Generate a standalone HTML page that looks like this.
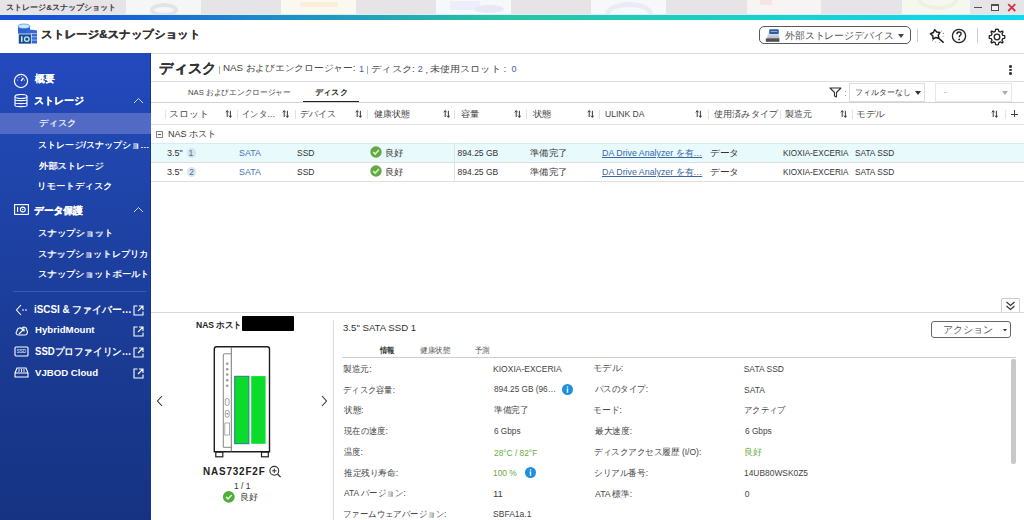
<!DOCTYPE html>
<html><head><meta charset="utf-8">
<style>
*{box-sizing:border-box;margin:0;padding:0}
html,body{width:1024px;height:520px;overflow:hidden;background:#fff;font-family:"Liberation Sans",sans-serif;color:#333}
.a{position:absolute;white-space:nowrap}
.t{position:absolute;white-space:nowrap;line-height:16px;height:16px;transform-origin:0 0}
#titlebar{position:absolute;left:0;top:0;width:1024px;height:14px;background:#e6e4e7;overflow:hidden}
#stripe{position:absolute;left:0;top:14px;width:1024px;height:6px;border-top:1px solid #dcedf6;background:linear-gradient(90deg,#1c4ed6 0%,#1a5ad6 10%,#1e88c8 25%,#26c5a3 50%,#1ad0cc 75%,#10d8f0 100%)}
#header{position:absolute;left:0;top:20px;width:1024px;height:34px;background:#fff;border-bottom:1px solid #dcdcdc}
#side{position:absolute;left:0;top:53px;width:151px;height:467px;background:linear-gradient(180deg,#2349be 0%,#2046ae 22%,#19388e 74%,#163383 100%);border-right:1px solid #1a3590}
.line{position:absolute;background:#dedede}
.sort{position:absolute;width:7px;height:8px}
.vs{position:absolute;width:1px;height:9px;background:#e2e2e2}
</style></head><body>

<!-- Title bar -->
<div id="titlebar">
  <div class="a" style="left:126px;top:0;width:75px;height:14px;background:#f6f6f7"></div>
  <div class="a" style="left:150px;top:3px;width:28px;height:14px;border-radius:50%;border:4px solid #e4e4e6"></div>
  <div class="a" style="left:281px;top:0;width:75px;height:14px;background:#fbf8f0"></div>
  <div class="a" style="left:300px;top:2px;width:38px;height:5px;background:#f8efdc"></div>
  <div class="a" style="left:436px;top:0;width:75px;height:14px;background:#f7f8fc"></div>
  <div class="a" style="left:450px;top:1px;width:30px;height:9px;background:#eceffa"></div>
  <div class="a" style="left:474px;top:5px;width:30px;height:8px;border-radius:50%;background:#eae8f6"></div>
  <div class="a" style="left:591px;top:0;width:75px;height:14px;background:#f8f8fc"></div>
  <div class="a" style="left:605px;top:2px;width:48px;height:24px;border-radius:50%;border:5px solid #ebebf6"></div>
  <div class="a" style="left:747px;top:0;width:74px;height:14px;background:#f9f4f4"></div>
  <div class="a" style="left:760px;top:0;width:12px;height:5px;background:#f6e4e4"></div>
  <div class="a" style="left:902px;top:0;width:68px;height:14px;background:#f6f7ee"></div>
  <div class="a" style="left:918px;top:-10px;width:40px;height:20px;border-radius:50%;border:4px solid #eef0e2"></div>
  <div class="a" style="left:974px;top:6.5px;width:8px;height:1.6px;background:#505050"></div>
  <div class="a" style="left:991px;top:3.8px;width:8.4px;height:7px;border:1.4px solid #505050;border-top-width:2px;background:#f2f2f4"></div>
  <svg class="a" style="left:1007px;top:3px" width="10" height="9" viewBox="0 0 10 9"><path d="M1.2 1.2 L8.3 8 M8.3 1.2 L1.2 8" stroke="#cf3242" stroke-width="1.8"/></svg>
</div>
<div id="stripe"></div>

<!-- Header -->
<div id="header">
  <svg class="a" style="left:16px;top:3px" width="24" height="23" viewBox="16 23 24 23">
    <rect x="18" y="26.3" width="12" height="8.5" fill="#2b62d8"/>
    <ellipse cx="24" cy="26.3" rx="6" ry="2.3" fill="#c6ecfa" stroke="#3a6fd8" stroke-width="0.6"/>
    <path d="M25.8 30.5 Q31.4 29 37 30.5 V43.6 H25.8 Z" fill="#3466dc"/>
    <rect x="31" y="33.2" width="6" height="0.9" fill="#a8c6f6"/>
    <rect x="31" y="36.4" width="6" height="0.9" fill="#a8c6f6"/>
    <rect x="31" y="39.6" width="6" height="0.9" fill="#a8c6f6"/>
    <rect x="18.3" y="34" width="13" height="10" fill="#1a4d8c" stroke="#fff" stroke-width="0.7"/>
    <rect x="21" y="36.3" width="1.5" height="5.6" fill="#c4ecfa"/>
    <circle cx="26.8" cy="39.1" r="2.3" fill="none" stroke="#c4ecfa" stroke-width="1.3"/>
  </svg>
  <div class="a" style="left:759px;top:6.3px;width:152px;height:18.2px;border:1.2px solid #5a5a5a;border-radius:5px"></div>
  <svg class="a" style="left:764px;top:8px" width="18" height="16" viewBox="764 28 18 16">
    <defs><linearGradient id="dg" x1="0" y1="0" x2="0" y2="1"><stop offset="0" stop-color="#f0f4fa"/><stop offset="1" stop-color="#aab4c0"/></linearGradient></defs>
    <path d="M767 39 L768.5 31.5 H778.5 L779.5 39 Z" fill="url(#dg)"/>
    <rect x="769.2" y="29.3" width="9.6" height="4.6" rx="1.2" fill="#2c59a4"/>
    <rect x="770.5" y="31" width="7" height="0.8" fill="#9fb8e0"/>
    <rect x="765.8" y="38.4" width="13.6" height="3.4" fill="#505050"/>
  </svg>
  <svg class="a" style="left:898px;top:14px" width="6" height="4" viewBox="0 0 6 4"><path d="M0 0 H6 L3 4 Z" fill="#444"/></svg>
  <div class="a" style="left:917px;top:9px;width:1px;height:13px;background:#ccc"></div>
  <svg class="a" style="left:926px;top:6px" width="22" height="20" viewBox="926 26 22 20">
    <path d="M934.70 29.65 L936.76 32.04 L939.89 32.41 L938.26 35.10 L938.87 38.20 L935.80 37.47 L933.05 39.01 L932.79 35.87 L930.48 33.73 L933.39 32.51 Z" fill="none" stroke="#1a1a1a" stroke-width="1.45" stroke-linejoin="round"/>
    <path d="M937.6 37.2 L943.6 42.6" stroke="#1a1a1a" stroke-width="1.5"/>
    <circle cx="941.6" cy="31" r="0.55" fill="#777"/><circle cx="943.4" cy="33.4" r="0.55" fill="#777"/><circle cx="943" cy="36.6" r="0.55" fill="#888"/><circle cx="932.6" cy="40.6" r="0.55" fill="#888"/><circle cx="935.6" cy="42" r="0.5" fill="#999"/><circle cx="939.5" cy="42.4" r="0.5" fill="#999"/>
  </svg>
  <svg class="a" style="left:951px;top:8px" width="16" height="16" viewBox="0 0 16 16">
    <circle cx="8" cy="8" r="6.6" fill="none" stroke="#222" stroke-width="1.3"/>
    <path d="M5.9 6.2 C5.9 4.7 7 4 8 4 C9.2 4 10.1 4.8 10.1 5.9 C10.1 7.3 8.2 7.4 8.2 9.3" fill="none" stroke="#222" stroke-width="1.4"/>
    <circle cx="8.2" cy="11.4" r="0.9" fill="#222"/>
  </svg>
  <div class="a" style="left:977px;top:8px;width:1px;height:15px;background:#ccc"></div>
  <svg class="a" style="left:988px;top:8px" width="18" height="18" viewBox="0 0 18 18">
    <path d="M9 1.2 L10.4 1.4 L10.8 3.4 L12.4 4.1 L14.1 3 L15.1 4 L14 5.7 L14.7 7.3 L16.7 7.7 L16.8 9 L16.7 10.3 L14.7 10.7 L14 12.3 L15.1 14 L14.1 15 L12.4 13.9 L10.8 14.6 L10.4 16.6 L9 16.8 L7.6 16.6 L7.2 14.6 L5.6 13.9 L3.9 15 L2.9 14 L4 12.3 L3.3 10.7 L1.3 10.3 L1.2 9 L1.3 7.7 L3.3 7.3 L4 5.7 L2.9 4 L3.9 3 L5.6 4.1 L7.2 3.4 L7.6 1.4 Z" fill="none" stroke="#222" stroke-width="1.3" stroke-linejoin="round"/>
    <circle cx="9" cy="9" r="2.8" fill="none" stroke="#222" stroke-width="1.3"/>
  </svg>
</div>

<!-- Sidebar -->
<div id="side">
  <div class="a" style="left:0;top:60px;width:151px;height:21px;background:#506ac6"></div>
  <svg class="a" style="left:13px;top:20px" width="16" height="16" viewBox="0 0 16 16">
    <circle cx="8" cy="8" r="6.6" fill="none" stroke="#fff" stroke-width="1.2"/>
    <path d="M8 8 L10.5 5" stroke="#fff" stroke-width="1.3"/>
    <circle cx="4.5" cy="7" r="0.5" fill="#fff"/><circle cx="6" cy="4.5" r="0.5" fill="#fff"/><circle cx="8.5" cy="3.8" r="0.5" fill="#fff"/><circle cx="11.5" cy="7" r="0.5" fill="#fff"/>
  </svg>
  <svg class="a" style="left:13px;top:41px" width="16" height="14" viewBox="0 0 16 14">
    <ellipse cx="8" cy="2.5" rx="6" ry="2" fill="none" stroke="#fff" stroke-width="1.1"/>
    <path d="M2 2.5 V11.5 C2 13 14 13 14 11.5 V2.5 M2 5.5 C2 7 14 7 14 5.5 M2 8.5 C2 10 14 10 14 8.5" fill="none" stroke="#fff" stroke-width="1.1"/>
  </svg>
  <svg class="a" style="left:133px;top:44px" width="11" height="7" viewBox="0 0 11 7"><path d="M1 6 L5.5 1.5 L10 6" fill="none" stroke="#cdd6f5" stroke-width="1"/></svg>
  <svg class="a" style="left:14px;top:151px" width="15" height="11" viewBox="0 0 15 11">
    <rect x="0.6" y="0.6" width="13.8" height="9.8" fill="none" stroke="#fff" stroke-width="1.1"/>
    <rect x="3" y="3" width="1.2" height="5" fill="#fff"/>
    <circle cx="8.8" cy="5.5" r="2.4" fill="none" stroke="#fff" stroke-width="1.1"/>
    <circle cx="8.8" cy="5.5" r="0.7" fill="#fff"/>
  </svg>
  <svg class="a" style="left:133px;top:153px" width="11" height="7" viewBox="0 0 11 7"><path d="M1 6 L5.5 1.5 L10 6" fill="none" stroke="#cdd6f5" stroke-width="1"/></svg>
  <div class="a" style="left:13px;top:238px;width:133px;height:1px;background:#3d58b8"></div>
  <svg class="a" style="left:15px;top:251px" width="13" height="12" viewBox="0 0 13 12">
    <path d="M6 1 L1.5 6 L6 11" fill="none" stroke="#fff" stroke-width="1.1"/>
    <path d="M7 6 H12" stroke="#fff" stroke-width="1.1" stroke-dasharray="2 1"/>
  </svg>
  <svg class="a" style="left:15px;top:272px" width="13" height="11" viewBox="0 0 13 11">
    <path d="M3.5 10 C1 10 0.5 7.5 2 6.2 C1.8 3.2 5 2 6.8 3.6 C8 1.2 12 1.8 11.8 5.3 C13 6.3 12.5 10 10 10 Z" fill="none" stroke="#fff" stroke-width="1.1"/>
    <path d="M4 9 L9 4 M6.5 4 H9 V6.5" fill="none" stroke="#fff" stroke-width="1.1"/>
  </svg>
  <svg class="a" style="left:14px;top:293px" width="15" height="11" viewBox="0 0 15 11">
    <rect x="1" y="1" width="13" height="9" rx="1" fill="none" stroke="#fff" stroke-width="1.1"/>
    <text x="7.5" y="6.8" font-size="4.5" fill="#fff" text-anchor="middle" font-family="Liberation Sans">SSD</text>
  </svg>
  <svg class="a" style="left:14px;top:314px" width="15" height="11" viewBox="0 0 15 11">
    <path d="M1 6 L3 1 H12 L14 6 V10 H1 Z M1 6 H14" fill="none" stroke="#fff" stroke-width="1.1"/>
    <path d="M5 2 V5 M7.5 2 V5 M10 2 V5" stroke="#fff" stroke-width="0.9"/>
  </svg>
  <svg class="a" style="left:133px;top:252px" width="11" height="11" viewBox="0 0 11 11"><path d="M4.5 1 H1 V10 H10 V6.5 M6 1 H10 V5 M10 1 L5 6" fill="none" stroke="#fff" stroke-width="1.1"/></svg>
  <svg class="a" style="left:133px;top:273px" width="11" height="11" viewBox="0 0 11 11"><path d="M4.5 1 H1 V10 H10 V6.5 M6 1 H10 V5 M10 1 L5 6" fill="none" stroke="#fff" stroke-width="1.1"/></svg>
  <svg class="a" style="left:133px;top:294px" width="11" height="11" viewBox="0 0 11 11"><path d="M4.5 1 H1 V10 H10 V6.5 M6 1 H10 V5 M10 1 L5 6" fill="none" stroke="#fff" stroke-width="1.1"/></svg>
  <svg class="a" style="left:133px;top:315px" width="11" height="11" viewBox="0 0 11 11"><path d="M4.5 1 H1 V10 H10 V6.5 M6 1 H10 V5 M10 1 L5 6" fill="none" stroke="#fff" stroke-width="1.1"/></svg>
</div>

<!-- MAIN static -->
<div class="a" style="left:219px;top:66px;width:1px;height:8px;background:#aaa"></div>
<div class="a" style="left:367px;top:66px;width:1px;height:8px;background:#aaa"></div>
<div class="a" style="left:1009px;top:65.2px;width:2.5px;height:2.5px;border-radius:50%;background:#3a3a3a"></div>
<div class="a" style="left:1009px;top:68.8px;width:2.5px;height:2.5px;border-radius:50%;background:#3a3a3a"></div>
<div class="a" style="left:1009px;top:72.4px;width:2.5px;height:2.5px;border-radius:50%;background:#3a3a3a"></div>
<div class="line" style="left:151px;top:81px;width:873px;height:1px"></div>

<div class="a" style="left:303px;top:101px;width:56px;height:2px;background:#222"></div>
<svg class="a" style="left:829px;top:87px" width="13" height="11" viewBox="0 0 13 11"><path d="M1 1 H12 L7.5 5.5 V10 L5.5 9 V5.5 Z" fill="none" stroke="#333" stroke-width="1.1" stroke-linejoin="round"/></svg>
<div class="a" style="left:845px;top:91px;width:1px;height:1px;background:#aaa"></div>
<div class="a" style="left:845px;top:95px;width:1px;height:1px;background:#aaa"></div>
<div class="a" style="left:849px;top:83px;width:76px;height:19px;border:1px solid #ddd"></div>
<svg class="a" style="left:915px;top:91px" width="6" height="4" viewBox="0 0 6 4"><path d="M0 0 H6 L3 4 Z" fill="#333"/></svg>
<div class="a" style="left:935px;top:83px;width:77px;height:19px;border:1px solid #e8e8e8"></div>
<div class="a" style="left:944px;top:92px;width:3px;height:1px;background:#ccc"></div>
<svg class="a" style="left:1002px;top:91px" width="6" height="4" viewBox="0 0 6 4"><path d="M0 0 H6 L3 4 Z" fill="#aaa"/></svg>
<div class="line" style="left:151px;top:102px;width:873px;height:1px;background:#d2d2d2"></div>

<svg class="sort" style="left:225.2px;top:110px" width="7" height="8" viewBox="0 0 7 8"><path d="M2.2 7 V0.8 M0.8 2.3 L2.2 0.6 L3.6 2.3 M5.4 0.8 V7.2 M4 5.6 L5.4 7.4 L6.8 5.6" fill="none" stroke="#3a3a3a" stroke-width="1"/></svg>
<svg class="sort" style="left:282.4px;top:110px" width="7" height="8" viewBox="0 0 7 8"><path d="M2.2 7 V0.8 M0.8 2.3 L2.2 0.6 L3.6 2.3 M5.4 0.8 V7.2 M4 5.6 L5.4 7.4 L6.8 5.6" fill="none" stroke="#3a3a3a" stroke-width="1"/></svg>
<svg class="sort" style="left:354.6px;top:110px" width="7" height="8" viewBox="0 0 7 8"><path d="M2.2 7 V0.8 M0.8 2.3 L2.2 0.6 L3.6 2.3 M5.4 0.8 V7.2 M4 5.6 L5.4 7.4 L6.8 5.6" fill="none" stroke="#3a3a3a" stroke-width="1"/></svg>
<svg class="sort" style="left:442.5px;top:110px" width="7" height="8" viewBox="0 0 7 8"><path d="M2.2 7 V0.8 M0.8 2.3 L2.2 0.6 L3.6 2.3 M5.4 0.8 V7.2 M4 5.6 L5.4 7.4 L6.8 5.6" fill="none" stroke="#3a3a3a" stroke-width="1"/></svg>
<svg class="sort" style="left:513.8px;top:110px" width="7" height="8" viewBox="0 0 7 8"><path d="M2.2 7 V0.8 M0.8 2.3 L2.2 0.6 L3.6 2.3 M5.4 0.8 V7.2 M4 5.6 L5.4 7.4 L6.8 5.6" fill="none" stroke="#3a3a3a" stroke-width="1"/></svg>
<svg class="sort" style="left:586.5px;top:110px" width="7" height="8" viewBox="0 0 7 8"><path d="M2.2 7 V0.8 M0.8 2.3 L2.2 0.6 L3.6 2.3 M5.4 0.8 V7.2 M4 5.6 L5.4 7.4 L6.8 5.6" fill="none" stroke="#3a3a3a" stroke-width="1"/></svg>
<svg class="sort" style="left:695.0px;top:110px" width="7" height="8" viewBox="0 0 7 8"><path d="M2.2 7 V0.8 M0.8 2.3 L2.2 0.6 L3.6 2.3 M5.4 0.8 V7.2 M4 5.6 L5.4 7.4 L6.8 5.6" fill="none" stroke="#3a3a3a" stroke-width="1"/></svg>
<svg class="sort" style="left:840.0px;top:110px" width="7" height="8" viewBox="0 0 7 8"><path d="M2.2 7 V0.8 M0.8 2.3 L2.2 0.6 L3.6 2.3 M5.4 0.8 V7.2 M4 5.6 L5.4 7.4 L6.8 5.6" fill="none" stroke="#3a3a3a" stroke-width="1"/></svg>
<svg class="sort" style="left:991.0px;top:110px" width="7" height="8" viewBox="0 0 7 8"><path d="M2.2 7 V0.8 M0.8 2.3 L2.2 0.6 L3.6 2.3 M5.4 0.8 V7.2 M4 5.6 L5.4 7.4 L6.8 5.6" fill="none" stroke="#3a3a3a" stroke-width="1"/></svg>
<div class="vs" style="left:165px;top:110px"></div>
<div class="vs" style="left:237px;top:110px"></div>
<div class="vs" style="left:295px;top:110px"></div>
<div class="vs" style="left:367px;top:110px"></div>
<div class="vs" style="left:454px;top:110px"></div>
<div class="vs" style="left:526px;top:110px"></div>
<div class="vs" style="left:599px;top:110px"></div>
<div class="vs" style="left:708px;top:110px"></div>
<div class="vs" style="left:780px;top:110px"></div>
<div class="vs" style="left:852px;top:110px"></div>
<div class="vs" style="left:1005px;top:110px"></div>
<div class="a" style="left:1011px;top:108px;width:7px;height:1.3px;background:#444;top:113.5px"></div>
<div class="a" style="left:1013.9px;top:110px;width:1.3px;height:7px;background:#444"></div>
<div class="line" style="left:151px;top:124px;width:873px;height:1px"></div>

<div class="a" style="left:156px;top:131px;width:7px;height:7px;border:1px solid #888"></div>
<div class="a" style="left:158px;top:134px;width:3px;height:1px;background:#555"></div>

<div class="a" style="left:151px;top:143px;width:873px;height:19px;background:#e8fafc"></div>
<div class="line" style="left:151px;top:143px;width:873px;height:1px;background:#d3eef2"></div>
<div class="line" style="left:151px;top:162px;width:873px;height:1px"></div>
<div class="line" style="left:151px;top:181px;width:873px;height:1px"></div>
<div class="line" style="left:454px;top:143px;width:1px;height:38px;background:#e2e2e2"></div>

<div class="a" style="left:186.5px;top:148.3px;width:9.5px;height:9.5px;border-radius:50%;background:#d6e4ef"></div>
<div class="a" style="left:186.5px;top:167.3px;width:9.5px;height:9.5px;border-radius:50%;background:#dce7f0"></div>
<!--BADGE-->
<svg class="a" style="left:370.3px;top:146.2px" width="12" height="12" viewBox="0 0 12 12"><circle cx="6" cy="6" r="5.7" fill="#64a746"/><path d="M3.2 6.1 L5.2 8.1 L8.9 4" fill="none" stroke="#d6f7b4" stroke-width="1.5"/></svg>
<svg class="a" style="left:370.3px;top:165.2px" width="12" height="12" viewBox="0 0 12 12"><circle cx="6" cy="6" r="5.7" fill="#64a746"/><path d="M3.2 6.1 L5.2 8.1 L8.9 4" fill="none" stroke="#d6f7b4" stroke-width="1.5"/></svg>

<!-- collapse tab -->
<div class="a" style="left:1001px;top:298px;width:19px;height:15px;border:1px solid #ccc;border-bottom:none;border-radius:2px 2px 0 0;background:#fff"></div>
<svg class="a" style="left:1005px;top:301px" width="11" height="10" viewBox="0 0 11 10"><path d="M1.5 1 L5.5 4.5 L9.5 1 M1.5 5 L5.5 8.5 L9.5 5" fill="none" stroke="#333" stroke-width="1.2"/></svg>
<div class="line" style="left:151px;top:312px;width:873px;height:1px;background:#d8d8d8"></div>

<div class="a" style="left:242px;top:316px;width:52px;height:15px;background:#000;border-radius:1px"></div>
<svg class="a" style="left:200px;top:340px" width="80" height="120" viewBox="200 340 80 120">
  <path d="M214.3 451.8 V349 Q214.3 346.7 216.6 346.7 H267.2 Q269.5 346.7 269.5 349 V451.8 Z" fill="#fff" stroke="#1e1e1e" stroke-width="1.4"/>
  <path d="M231.3 347 V451.5" stroke="#666" stroke-width="0.9"/>
  <path d="M231.3 353.8 H224.5 Q223.3 353.8 223.3 355 V447.3 H231.3" fill="none" stroke="#777" stroke-width="0.9"/>
  <circle cx="227.2" cy="363.7" r="1.25" fill="#999"/><circle cx="227.2" cy="369.2" r="1.25" fill="#999"/><circle cx="227.2" cy="374.6" r="1.25" fill="#999"/><circle cx="227.2" cy="380.2" r="1.25" fill="#999"/><circle cx="227.2" cy="385.8" r="1.25" fill="#999"/>
  <rect x="225.3" y="398.5" width="3.8" height="7" rx="1.9" fill="none" stroke="#888" stroke-width="0.8"/>
  <rect x="225.3" y="410.3" width="3.8" height="7" rx="1.9" fill="none" stroke="#888" stroke-width="0.8"/>
  <circle cx="227.2" cy="413.8" r="0.8" fill="#666"/>
  <rect x="224.8" y="423" width="4.8" height="12" fill="none" stroke="#999" stroke-width="0.8"/>
  <rect x="234.7" y="376.3" width="14.2" height="67.4" fill="#0bdc2c" stroke="#2a7890" stroke-width="1"/>
  <rect x="251.2" y="376.1" width="14.4" height="67.7" fill="#0bdc2c"/>
  <rect x="215.8" y="452.2" width="7" height="4.6" fill="#fff" stroke="#1e1e1e" stroke-width="1.2"/>
  <rect x="261.5" y="452.2" width="6.8" height="4.6" fill="#fff" stroke="#1e1e1e" stroke-width="1.2"/>
</svg>
<svg class="a" style="left:156px;top:395px" width="8" height="12" viewBox="0 0 8 12"><path d="M6 1 L1.5 6 L6 11" fill="none" stroke="#333" stroke-width="1.1"/></svg>
<svg class="a" style="left:320px;top:395px" width="8" height="12" viewBox="0 0 8 12"><path d="M2 1 L6.5 6 L2 11" fill="none" stroke="#333" stroke-width="1.1"/></svg>
<svg class="a" style="left:268px;top:464px" width="14" height="14" viewBox="268 464 14 14"><circle cx="274.3" cy="470.8" r="4.4" fill="none" stroke="#333" stroke-width="1.1"/><path d="M277.5 474 L280.6 477.1" stroke="#333" stroke-width="1.3"/><path d="M272.1 470.8 H276.5 M274.3 468.6 V473" stroke="#333" stroke-width="1"/></svg>
<svg class="a" style="left:222px;top:490px" width="14" height="14" viewBox="222 490 14 14"><circle cx="228.8" cy="496.8" r="5.9" fill="#4fae3a"/><path d="M226 496.9 L228 498.9 L231.7 494.9" fill="none" stroke="#e8fbe0" stroke-width="1.5"/></svg>
<div class="a" style="left:333px;top:320px;width:1px;height:200px;background:#ddd"></div>

<div class="a" style="left:931px;top:321px;width:80px;height:17px;border:1px solid #666;border-radius:3px"></div>
<svg class="a" style="left:1002.5px;top:328.5px" width="4" height="3" viewBox="0 0 4 3"><path d="M0 0 H4 L2 2.5 Z" fill="#333"/></svg>
<div class="line" style="left:342px;top:357px;width:674px;height:1px;background:#cfcfcf"></div>
<div class="a" style="left:1011px;top:359px;width:5px;height:105px;border-radius:2px;background:#c8c8c8"></div>
<svg class="a" style="left:562px;top:384px" width="11" height="11" viewBox="0 0 11 11"><circle cx="5.5" cy="5.5" r="5.5" fill="#1e8fe0"/><rect x="4.8" y="4.5" width="1.4" height="4.2" fill="#fff"/><circle cx="5.5" cy="3" r="0.8" fill="#fff"/></svg>
<svg class="a" style="left:525px;top:467px" width="11" height="11" viewBox="0 0 11 11"><circle cx="5.5" cy="5.5" r="5.5" fill="#1e8fe0"/><rect x="4.8" y="4.5" width="1.4" height="4.2" fill="#fff"/><circle cx="5.5" cy="3" r="0.8" fill="#fff"/></svg>

<div class="t" style="left:6.25px;top:0.2px;font-size:8.0px;font-weight:bold;color:#3a3a3a;">ストレージ&amp;スナップショット</div>
<div class="t" style="left:40.95px;top:26.4px;font-size:11.0px;font-weight:bold;color:#333;transform:scaleX(1.054);text-shadow:0.35px 0 0 currentColor;">ストレージ&amp;スナップショット</div>
<div class="t" style="left:785.0px;top:28.2px;font-size:10.0px;font-weight:normal;color:#555;transform:scaleX(0.986);">外部ストレージデバイス</div>
<div class="t" style="left:34.7px;top:70.9px;font-size:10.0px;font-weight:bold;color:#fff;transform:scaleX(0.965);text-shadow:0.35px 0 0 currentColor;">概要</div>
<div class="t" style="left:33.7px;top:93.0px;font-size:10.0px;font-weight:bold;color:#fff;text-shadow:0.35px 0 0 currentColor;">ストレージ</div>
<div class="t" style="left:38.75px;top:115.3px;font-size:9.0px;font-weight:normal;color:#e8ecf8;transform:scaleX(1.036);text-shadow:0.3px 0 0 currentColor;">ディスク</div>
<div class="t" style="left:37.74px;top:137.3px;font-size:9.0px;font-weight:normal;color:#fff;transform:scaleX(1.006);text-shadow:0.3px 0 0 currentColor;">ストレージ/スナップショ…</div>
<div class="t" style="left:38.75px;top:157.7px;font-size:9.0px;font-weight:normal;color:#fff;transform:scaleX(1.025);text-shadow:0.3px 0 0 currentColor;">外部ストレージ</div>
<div class="t" style="left:36.66px;top:177.5px;font-size:9.0px;font-weight:normal;color:#fff;transform:scaleX(1.047);text-shadow:0.3px 0 0 currentColor;">リモートディスク</div>
<div class="t" style="left:34.3px;top:202.5px;font-size:10.0px;font-weight:bold;color:#fff;transform:scaleX(0.974);text-shadow:0.35px 0 0 currentColor;">データ保護</div>
<div class="t" style="left:37.66px;top:224.9px;font-size:9.0px;font-weight:normal;color:#fff;transform:scaleX(1.041);text-shadow:0.3px 0 0 currentColor;">スナップショット</div>
<div class="t" style="left:37.68px;top:245.9px;font-size:9.0px;font-weight:normal;color:#fff;transform:scaleX(1.022);text-shadow:0.3px 0 0 currentColor;">スナップショットレプリカ</div>
<div class="t" style="left:37.67px;top:266.0px;font-size:9.0px;font-weight:normal;color:#fff;transform:scaleX(1.031);text-shadow:0.3px 0 0 currentColor;">スナップショットボールト</div>
<div class="t" style="left:34.21px;top:301.6px;font-size:10.0px;font-weight:bold;color:#fff;transform:scaleX(0.986);">iSCSI &amp; ファイバー…</div>
<div class="t" style="left:35.2px;top:322.3px;font-size:9.5px;font-weight:bold;color:#fff;transform:scaleX(1.017);">HybridMount</div>
<div class="t" style="left:35.2px;top:343.8px;font-size:10.0px;font-weight:bold;color:#fff;transform:scaleX(0.958);">SSDプロファイリン…</div>
<div class="t" style="left:35.2px;top:365.0px;font-size:9.5px;font-weight:bold;color:#fff;transform:scaleX(1.013);">VJBOD Cloud</div>
<div class="t" style="left:159.4px;top:60.0px;font-size:14.0px;font-weight:bold;color:#333;transform:scaleX(1.02);text-shadow:0.35px 0 0 currentColor;">ディスク</div>
<div class="t" style="left:223.12px;top:60.0px;font-size:9.0px;font-weight:normal;color:#444;transform:scaleX(1.081);">NAS およびエンクロージャー:</div>
<div class="t" style="left:359.0px;top:61.0px;font-size:9px;font-weight:normal;color:#3b64a8;">1</div>
<div class="t" style="left:371.36px;top:60.5px;font-size:9.0px;font-weight:normal;color:#444;transform:scaleX(1.141);">ディスク:</div>
<div class="t" style="left:417.8px;top:61.0px;font-size:9px;font-weight:normal;color:#3b64a8;">2</div>
<div class="t" style="left:425.5px;top:62.0px;font-size:9px;font-weight:normal;color:#444;">,</div>
<div class="t" style="left:429.88px;top:61.0px;font-size:9.0px;font-weight:normal;color:#444;transform:scaleX(1.121);">未使用スロット :</div>
<div class="t" style="left:511.6px;top:61.0px;font-size:9px;font-weight:normal;color:#3b64a8;">0</div>
<div class="t" style="left:188.04px;top:85.0px;font-size:8.0px;font-weight:normal;color:#444;transform:scaleX(0.964);">NAS およびエンクロージャー</div>
<div class="t" style="left:314.58px;top:85.0px;font-size:8.0px;font-weight:bold;color:#222;transform:scaleX(1.023);">ディスク</div>
<div class="t" style="left:854.52px;top:85.0px;font-size:8.0px;font-weight:normal;color:#333;transform:scaleX(0.991);">フィルターなし</div>
<div class="t" style="left:169.31px;top:105.5px;font-size:9.0px;font-weight:normal;color:#444;transform:scaleX(1.097);">スロット</div>
<div class="t" style="left:242.47px;top:105.5px;font-size:9.0px;font-weight:normal;color:#444;transform:scaleX(0.929);">インタ…</div>
<div class="t" style="left:300.4px;top:105.5px;font-size:9.0px;font-weight:normal;color:#444;">デバイス</div>
<div class="t" style="left:373.7px;top:106.0px;font-size:9.0px;font-weight:normal;color:#444;">健康状態</div>
<div class="t" style="left:460.7px;top:106.0px;font-size:9.0px;font-weight:normal;color:#444;transform:scaleX(1.035);">容量</div>
<div class="t" style="left:533.2px;top:106.0px;font-size:9.0px;font-weight:normal;color:#444;transform:scaleX(1.035);">状態</div>
<div class="t" style="left:604.55px;top:106.0px;font-size:9px;font-weight:normal;color:#444;transform:scaleX(0.951);">ULINK DA</div>
<div class="t" style="left:714.0px;top:106.0px;font-size:9.0px;font-weight:normal;color:#444;transform:scaleX(1.016);">使用済みタイプ</div>
<div class="t" style="left:785.0px;top:106.0px;font-size:9.0px;font-weight:normal;color:#444;">製造元</div>
<div class="t" style="left:855.84px;top:105.5px;font-size:9.0px;font-weight:normal;color:#444;transform:scaleX(1.08);">モデル</div>
<div class="t" style="left:167.59px;top:125.7px;font-size:9.0px;font-weight:normal;color:#333;transform:scaleX(1.009);">NAS ホスト</div>
<div class="t" style="left:166.94px;top:145.3px;font-size:8.5px;font-weight:normal;color:#333;transform:scaleX(1.057);">3.5"</div>
<div class="t" style="left:238.96px;top:145.3px;font-size:8.5px;font-weight:normal;color:#3f73b8;transform:scaleX(1.04);">SATA</div>
<div class="t" style="left:297.0px;top:145.3px;font-size:8.5px;font-weight:normal;color:#333;">SSD</div>
<div class="t" style="left:384.86px;top:145.3px;font-size:9.0px;font-weight:normal;color:#333;transform:scaleX(1.044);">良好</div>
<div class="t" style="left:457.6px;top:145.3px;font-size:8.5px;font-weight:normal;color:#333;">894.25 GB</div>
<div class="t" style="left:530.0px;top:145.3px;font-size:9.0px;font-weight:normal;color:#333;transform:scaleX(1.041);">準備完了</div>
<div class="t" style="left:601.62px;top:144.8px;font-size:9.0px;font-weight:normal;color:#3d66a6;transform:scaleX(0.982);text-decoration:underline;">DA Drive Analyzer を有…</div>
<div class="t" style="left:709.92px;top:144.8px;font-size:9.0px;font-weight:normal;color:#333;transform:scaleX(1.083);">データ</div>
<div class="t" style="left:782.94px;top:145.3px;font-size:8.5px;font-weight:normal;color:#333;transform:scaleX(0.957);">KIOXIA-EXCERIA</div>
<div class="t" style="left:854.73px;top:145.3px;font-size:8.5px;font-weight:normal;color:#333;transform:scaleX(0.974);">SATA SSD</div>
<div class="t" style="left:166.94px;top:164.3px;font-size:8.5px;font-weight:normal;color:#333;transform:scaleX(1.057);">3.5"</div>
<div class="t" style="left:238.96px;top:164.3px;font-size:8.5px;font-weight:normal;color:#3f73b8;transform:scaleX(1.04);">SATA</div>
<div class="t" style="left:297.0px;top:164.3px;font-size:8.5px;font-weight:normal;color:#333;">SSD</div>
<div class="t" style="left:384.86px;top:164.3px;font-size:9.0px;font-weight:normal;color:#333;transform:scaleX(1.044);">良好</div>
<div class="t" style="left:457.6px;top:164.3px;font-size:8.5px;font-weight:normal;color:#333;">894.25 GB</div>
<div class="t" style="left:530.0px;top:164.3px;font-size:9.0px;font-weight:normal;color:#333;transform:scaleX(1.041);">準備完了</div>
<div class="t" style="left:601.62px;top:163.8px;font-size:9.0px;font-weight:normal;color:#3d66a6;transform:scaleX(0.982);text-decoration:underline;">DA Drive Analyzer を有…</div>
<div class="t" style="left:709.92px;top:163.8px;font-size:9.0px;font-weight:normal;color:#333;transform:scaleX(1.083);">データ</div>
<div class="t" style="left:782.94px;top:164.3px;font-size:8.5px;font-weight:normal;color:#333;transform:scaleX(0.957);">KIOXIA-EXCERIA</div>
<div class="t" style="left:854.73px;top:164.3px;font-size:8.5px;font-weight:normal;color:#333;transform:scaleX(0.974);">SATA SSD</div>
<div class="t" style="left:188.6px;top:145.0px;font-size:8.5px;font-weight:normal;color:#4c6a90;">1</div>
<div class="t" style="left:189.2px;top:164.0px;font-size:8.5px;font-weight:normal;color:#4c6a90;">2</div>
<div class="t" style="left:196.4px;top:316.8px;font-size:9.0px;font-weight:bold;color:#222;transform:scaleX(0.947);">NAS ホスト</div>
<div class="t" style="left:202.81px;top:463.25px;font-size:10.5px;font-weight:bold;color:#222;transform:scaleX(0.942);letter-spacing:0.9px;">NAS732F2F</div>
<div class="t" style="left:233.56px;top:477.5px;font-size:9px;font-weight:normal;color:#333;transform:scaleX(0.938);">1 / 1</div>
<div class="t" style="left:240.23px;top:489.0px;font-size:9.0px;font-weight:normal;color:#333;transform:scaleX(1.016);">良好</div>
<div class="t" style="left:342.5px;top:320.4px;font-size:9.5px;font-weight:normal;color:#333;transform:scaleX(1.014);">3.5" SATA SSD 1</div>
<div class="t" style="left:942.79px;top:321.5px;font-size:10.0px;font-weight:normal;color:#555;transform:scaleX(1.01);">アクション</div>
<div class="t" style="left:379.6px;top:343.3px;font-size:8.0px;font-weight:bold;color:#333;transform:scaleX(0.912);">情報</div>
<div class="t" style="left:419.6px;top:342.8px;font-size:8.0px;font-weight:normal;color:#555;transform:scaleX(0.947);">健康状態</div>
<div class="t" style="left:475.3px;top:342.8px;font-size:8.0px;font-weight:normal;color:#555;transform:scaleX(0.919);">予測</div>
<div class="t" style="left:343.43px;top:360.8px;font-size:9.0px;font-weight:normal;color:#444;transform:scaleX(0.971);">製造元:</div>
<div class="t" style="left:493.1px;top:360.8px;font-size:8.5px;font-weight:normal;color:#444;">KIOXIA-EXCERIA</div>
<div class="t" style="left:592.64px;top:360.3px;font-size:9.0px;font-weight:normal;color:#444;transform:scaleX(1.03);">モデル:</div>
<div class="t" style="left:743.7px;top:360.8px;font-size:8.5px;font-weight:normal;color:#444;">SATA SSD</div>
<div class="t" style="left:343.48px;top:381.6px;font-size:9.0px;font-weight:normal;color:#444;transform:scaleX(0.92);">ディスク容量:</div>
<div class="t" style="left:494.1px;top:381.1px;font-size:8.5px;font-weight:normal;color:#444;transform:scaleX(0.971);">894.25 GB (96…</div>
<div class="t" style="left:594.7px;top:381.1px;font-size:9.0px;font-weight:normal;color:#444;transform:scaleX(0.941);">バスのタイプ:</div>
<div class="t" style="left:743.71px;top:381.6px;font-size:8.5px;font-weight:normal;color:#444;transform:scaleX(0.995);">SATA</div>
<div class="t" style="left:344.4px;top:402.4px;font-size:9.0px;font-weight:normal;color:#444;transform:scaleX(0.95);">状態:</div>
<div class="t" style="left:494.1px;top:402.4px;font-size:9.0px;font-weight:normal;color:#444;transform:scaleX(0.968);">準備完了</div>
<div class="t" style="left:592.75px;top:401.9px;font-size:9.0px;font-weight:normal;color:#444;transform:scaleX(0.974);">モード:</div>
<div class="t" style="left:743.78px;top:402.4px;font-size:9.0px;font-weight:normal;color:#444;transform:scaleX(0.918);">アクティブ</div>
<div class="t" style="left:344.4px;top:423.2px;font-size:9.0px;font-weight:normal;color:#444;transform:scaleX(0.921);">現在の速度:</div>
<div class="t" style="left:494.1px;top:422.7px;font-size:8.5px;font-weight:normal;color:#444;transform:scaleX(0.967);">6 Gbps</div>
<div class="t" style="left:594.7px;top:423.2px;font-size:9.0px;font-weight:normal;color:#444;transform:scaleX(0.963);">最大速度:</div>
<div class="t" style="left:744.7px;top:422.7px;font-size:8.5px;font-weight:normal;color:#444;transform:scaleX(0.974);">6 Gbps</div>
<div class="t" style="left:344.4px;top:444.0px;font-size:9.0px;font-weight:normal;color:#444;transform:scaleX(0.92);">温度:</div>
<div class="t" style="left:494.1px;top:444.5px;font-size:8.5px;font-weight:normal;color:#6aaa3c;transform:scaleX(0.98);">28°C / 82°F</div>
<div class="t" style="left:593.75px;top:443.5px;font-size:9.0px;font-weight:normal;color:#444;transform:scaleX(0.95);">ディスクアクセス履歴 (I/O):</div>
<div class="t" style="left:743.68px;top:444.0px;font-size:9.0px;font-weight:normal;color:#6aaa3c;transform:scaleX(1.019);">良好</div>
<div class="t" style="left:344.4px;top:465.0px;font-size:9.0px;font-weight:normal;color:#444;transform:scaleX(0.957);">推定残り寿命:</div>
<div class="t" style="left:493.12px;top:465.0px;font-size:8.5px;font-weight:normal;color:#6aaa3c;transform:scaleX(0.983);">100 %</div>
<div class="t" style="left:593.74px;top:465.0px;font-size:9.0px;font-weight:normal;color:#444;transform:scaleX(0.958);">シリアル番号:</div>
<div class="t" style="left:743.71px;top:465.0px;font-size:8.5px;font-weight:normal;color:#444;transform:scaleX(0.989);">14UB80WSK0Z5</div>
<div class="t" style="left:344.4px;top:485.1px;font-size:9.0px;font-weight:normal;color:#444;transform:scaleX(0.937);">ATA バージョン:</div>
<div class="t" style="left:492.97px;top:485.6px;font-size:8.5px;font-weight:normal;color:#444;transform:scaleX(1.129);">11</div>
<div class="t" style="left:594.7px;top:485.6px;font-size:9.0px;font-weight:normal;color:#444;transform:scaleX(0.963);">ATA 標準:</div>
<div class="t" style="left:744.7px;top:485.6px;font-size:8.5px;font-weight:normal;color:#444;">0</div>
<div class="t" style="left:343.47px;top:505.6px;font-size:9.0px;font-weight:normal;color:#444;transform:scaleX(0.935);">ファームウェアバージョン:</div>
<div class="t" style="left:493.09px;top:506.1px;font-size:8.5px;font-weight:normal;color:#444;">SBFA1a.1</div>
</body></html>
